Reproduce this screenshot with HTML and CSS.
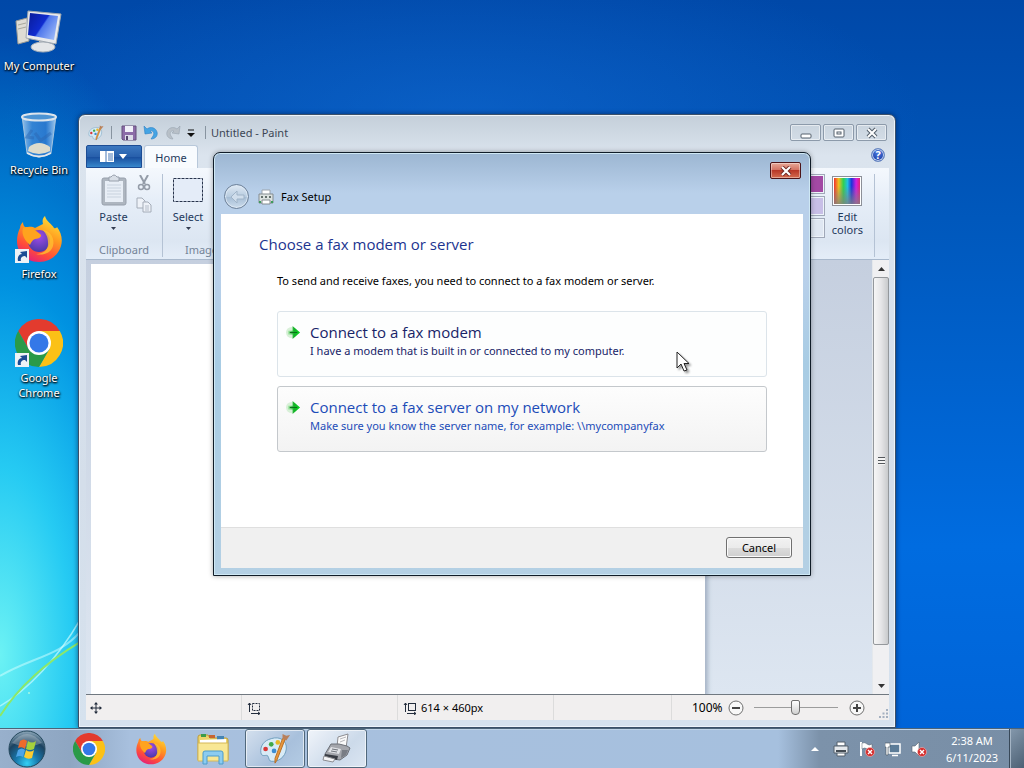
FILE: index.html
```html
<!DOCTYPE html>
<html lang="en">
<head>
    <meta charset="utf-8">
    <title>Fax Setup</title>
    <link rel="stylesheet" href="styles.css">
</head>

<body>
    <!-- Shared icons -->
    <svg class="defs" aria-hidden="true">
        <defs>
            <linearGradient id="ffFlame" x1="0.8" y1="0" x2="0.3" y2="1">
                <stop offset="0" stop-color="#ffe53a"/>
                <stop offset="0.4" stop-color="#ff9a1f"/>
                <stop offset="0.75" stop-color="#ff4b3a"/>
                <stop offset="1" stop-color="#e3207a"/>
            </linearGradient>
            <radialGradient id="ffGlobe" cx="0.5" cy="0.3" r="0.7">
                <stop offset="0" stop-color="#a04be8"/>
                <stop offset="1" stop-color="#4a3aa8"/>
            </radialGradient>
            <linearGradient id="screen" x1="0" y1="0.2" x2="1" y2="0.8">
                <stop offset="0" stop-color="#0a1ea0"/>
                <stop offset="0.45" stop-color="#0f2cd0"/>
                <stop offset="0.5" stop-color="#4f78ec"/>
                <stop offset="1" stop-color="#9fbcf8"/>
            </linearGradient>
            <linearGradient id="glass" x1="0" y1="0" x2="1" y2="0">
                <stop offset="0" stop-color="#b8d8f4" stop-opacity="0.8"/>
                <stop offset="0.3" stop-color="#4a90dc" stop-opacity="0.7"/>
                <stop offset="0.7" stop-color="#3a80d4" stop-opacity="0.7"/>
                <stop offset="1" stop-color="#c8e4fa" stop-opacity="0.8"/>
            </linearGradient>
            <radialGradient id="orb" cx="0.5" cy="0.9" r="0.9">
                <stop offset="0" stop-color="#35d0f4"/>
                <stop offset="0.35" stop-color="#1878ac"/>
                <stop offset="0.7" stop-color="#1c4260"/>
                <stop offset="1" stop-color="#90aabc"/>
            </radialGradient>
            <linearGradient id="rainbow">
                <stop offset="0" stop-color="#f03030"/>
                <stop offset="0.18" stop-color="#f0c020"/>
                <stop offset="0.36" stop-color="#30d050"/>
                <stop offset="0.52" stop-color="#20c0e0"/>
                <stop offset="0.68" stop-color="#2030d8"/>
                <stop offset="0.85" stop-color="#d020e0"/>
                <stop offset="1" stop-color="#e82070"/>
            </linearGradient>
            <linearGradient id="fade" x1="0" y1="0" x2="0" y2="1">
                <stop offset="0.3" stop-color="#808080" stop-opacity="0"/>
                <stop offset="1" stop-color="#808080" stop-opacity="0.8"/>
            </linearGradient>
            <linearGradient id="arrowGreen" x1="0" y1="0" x2="1" y2="0">
                <stop offset="0" stop-color="#b8ecb8"/>
                <stop offset="0.5" stop-color="#14b028"/>
                <stop offset="1" stop-color="#08d820"/>
            </linearGradient>
        </defs>
        <symbol id="chrome" viewBox="0 0 48 48">
            <path d="M3.2 12A24 24 0 0 1 44.8 12L24 12L13.6 30Z" fill="#e33b2e"/>
            <path d="M44.8 12A24 24 0 0 1 24 48L34.4 30L24 12Z" fill="#fbc116"/>
            <path d="M24 48A24 24 0 0 1 3.2 12L13.6 30L34.4 30Z" fill="#2a9a48"/>
            <circle cx="24" cy="24" r="12" fill="#fff"/>
            <circle cx="24" cy="24" r="9.5" fill="#3478e8"/>
        </symbol>
        <symbol id="firefox" viewBox="0 0 48 48">
            <path d="M30 1C31 6 37 9 39 13C41 14 42 12 42 12C46 17 48 24 46 31C43 41 34 47 24 47C11 47 2 38 2 26C2 21 3 17 5 13C5 10 7 8 8 7C8 10 9 11 11 13C14 11 18 12 20 13L28 9C27 5 28 3 30 1Z" fill="url(#ffFlame)"/>
            <circle cx="24" cy="26" r="11" fill="url(#ffGlobe)"/>
            <path d="M8 13C13 10 20 15 25 19C28 21 24 24 20 24C17 25 16 28 15 30C10 26 6 19 8 13Z" fill="#ffa31e"/>
            <path d="M28 15C36 16 40 24 38 31C36 38 28 41 21 39C29 39 34 34 33 27C33 21 30 18 28 15Z" fill="#ffbf30" opacity="0.8"/>
        </symbol>
        <symbol id="shortcut" viewBox="0 0 14 14">
            <rect width="14" height="14" fill="#eef2f6"/>
            <path d="M3 12C2 8 4 5 7 5L5 3L12 2L12 9L10 7C7 7 5 9 6 12Z" fill="#1c4c94"/>
        </symbol>
        <symbol id="palette" viewBox="0 0 34 34">
            <path d="M13 6C22 3 30 8 29 17C28 26 20 31 13 30C10 30 11 26 9 24C7 23 3 26 2 21C1 14 5 8 13 6Z" fill="#d8ebf6" stroke="#6c9cbc"/>
            <circle cx="13" cy="12" r="2.5" fill="#40a848"/>
            <circle cx="20" cy="10" r="2.5" fill="#e8b828"/>
            <circle cx="7" cy="17" r="2.5" fill="#d83838"/>
            <circle cx="16" cy="19" r="2.5" fill="#3c8cd0"/>
            <path d="M28 6L19 29L17 32L17 27L25 6Z" fill="#e8973c" stroke="#b86c20"/>
            <path d="M25 6L25 1L29 3L33 2L29 8Z" fill="#b8805c"/>
        </symbol>
        <symbol id="error" viewBox="0 0 10 10">
            <circle cx="5" cy="5" r="4.5" fill="#d42c2c" stroke="#f4c0c0" stroke-width="0.6"/>
            <path d="M3 3L7 7M7 3L3 7" stroke="#fff" stroke-width="1.4"/>
        </symbol>
        <symbol id="goArrow" viewBox="0 0 16 16">
            <circle cx="6" cy="8" r="6" fill="#d8f0d8"/>
            <path d="M2 6H7V1L15 8L7 15V10H2Z" fill="url(#arrowGreen)"/>
            <path d="M4 8H12" stroke="#086c18"/>
        </symbol>
    </svg>

    <main class="desktop">
        <svg class="rays" viewBox="0 0 80 200" preserveAspectRatio="none" aria-hidden="true">
            <path d="M0 178C28 162 58 130 80 92" stroke="#c8fcff" stroke-width="1.5" fill="none" opacity="0.7"/>
            <path d="M0 148C30 130 60 128 80 104" stroke="#d8ffff" stroke-width="2" fill="none" opacity="0.5"/>
            <path d="M0 188C20 156 50 132 80 114" stroke="#8ce868" stroke-width="2" fill="none"/>
            <circle cx="29" cy="165" r="1" fill="#a8f8e0"/>
        </svg>

        <nav class="shortcuts">
            <a class="shortcut" href="#computer">
                <svg viewBox="0 0 48 48" aria-hidden="true">
                    <path d="M1 14L12 11L14 34L3 37Z" fill="#dedcd4" stroke="#9a9a94"/>
                    <path d="M3 18L11 16M3 22L11 20" stroke="#a8a89c"/>
                    <path d="M24 32L32 33L33 40L24 40Z" fill="#c0c4c8"/>
                    <ellipse cx="28" cy="40" rx="12" ry="5" fill="#e4e6e8" stroke="#a8b0b8"/>
                    <path d="M13 4L46 7L41 37L11 31Z" fill="#e8eaec" stroke="#a0a8b0"/>
                    <path d="M15 6L43 9L39 33L13 28Z" fill="url(#screen)"/>
                </svg>
                <span>My Computer</span>
            </a>
            <a class="shortcut" href="#recycle">
                <svg viewBox="0 0 48 48" aria-hidden="true">
                    <path d="M7 5L12 42Q24 50 36 42L41 5Z" fill="url(#glass)" stroke="#a4c4e0"/>
                    <path d="M14 36Q24 28 35 36L35 40Q24 46 13 40Z" fill="#dedccc"/>
                    <path d="M17 19L12 26L19 27M25 30L36 22M20 22L26 30" stroke="#2c68b4" stroke-width="3" fill="none" opacity="0.5"/>
                    <ellipse cx="24" cy="6" rx="17" ry="3.5" fill="#4c94d4" stroke="#dce4ec" stroke-width="2"/>
                    <path d="M12 42Q24 49 36 42" stroke="#e4e8ec" stroke-width="2" fill="none"/>
                </svg>
                <span>Recycle Bin</span>
            </a>
            <a class="shortcut" href="#firefox">
                <svg viewBox="0 0 48 48" aria-hidden="true"><use href="#firefox" width="48" height="48"/><use href="#shortcut" y="34" width="14" height="14"/></svg>
                <span>Firefox</span>
            </a>
            <a class="shortcut" href="#chrome">
                <svg viewBox="0 0 48 48" aria-hidden="true"><use href="#chrome" width="48" height="48"/><use href="#shortcut" y="34" width="14" height="14"/></svg>
                <span>Google Chrome</span>
            </a>
        </nav>

        <!-- Paint -->
        <section class="paint">
            <header class="titlebar">
                <svg class="app-icon" viewBox="0 0 34 34" aria-hidden="true"><use href="#palette"/></svg>
                <span class="divider"></span>
                <div class="quick">
                    <button aria-label="Save">
                        <svg viewBox="0 0 16 16"><path d="M1 1H15V15H2L1 14Z" fill="#8c6ca8" stroke="#64507c"/><path d="M4 1H12V7H4Z" fill="#f0f0f8"/><path d="M4 10H12V15H4Z" fill="#dcdce8"/><path d="M5 11H7V15H5Z" fill="#54446c"/></svg>
                    </button>
                    <button aria-label="Undo">
                        <svg viewBox="0 0 16 16"><path d="M1 1L2 9L9 8L7 6C10 5 12 8 10 11L8 14C13 14 15 10 14 7C13 3 8 1 4 4Z" fill="#44a4e4" stroke="#2c80c4" stroke-width="0.6"/></svg>
                    </button>
                    <button aria-label="Redo">
                        <svg viewBox="0 0 16 16"><path d="M15 1L14 9L7 8L9 6C6 5 4 8 6 11L8 14C3 14 1 10 2 7C3 3 8 1 12 4Z" fill="#b8c0c8" stroke="#98a4b0" stroke-width="0.6"/></svg>
                    </button>
                    <button class="more" aria-label="Customize toolbar">
                        <svg viewBox="0 0 8 8"><path d="M1 1H7" stroke="#111"/><path d="M0 4H8L4 8Z" fill="#111"/></svg>
                    </button>
                </div>
                <span class="divider"></span>
                <h2>Untitled - Paint</h2>
                <div class="caption">
                    <button aria-label="Minimize"><svg viewBox="0 0 12 12"><rect x="1" y="7" width="10" height="4" rx="1" fill="#fff" stroke="#54606c"/></svg></button>
                    <button aria-label="Maximize"><svg viewBox="0 0 12 12"><rect x="1" y="2" width="10" height="8" rx="1" fill="#fff" stroke="#54606c"/><rect x="4" y="5" width="4" height="2" fill="#fff" stroke="#54606c"/></svg></button>
                    <button aria-label="Close"><svg viewBox="0 0 12 12"><path d="M2 2L10 10M10 2L2 10" stroke="#54606c" stroke-width="4"/><path d="M2 2L10 10M10 2L2 10" stroke="#fff" stroke-width="2"/></svg></button>
                </div>
            </header>

            <div class="tabs">
                <button class="file-tab" aria-label="Paint menu">
                    <svg viewBox="0 0 28 12"><rect width="14" height="11" fill="#fff"/><path d="M6 0V11M8 3H13M8 5H13M8 7H13M8 9H13" stroke="#4878b8"/><path d="M19 3H27L23 8Z" fill="#fff"/></svg>
                </button>
                <button class="tab">Home</button>
                <button class="help" aria-label="Help"><span>?</span></button>
            </div>

            <div class="ribbon">
                <div class="group clipboard">
                    <div class="tools">
                        <button class="tool">
                            <svg viewBox="0 0 26 32"><rect x="1" y="4" width="24" height="27" rx="2" fill="#aeb6c0" stroke="#98a0ac"/><rect x="4" y="7" width="18" height="21" fill="#e8eef6"/><path d="M8 3H10Q13 -1 16 3H18V7H8Z" fill="#d8dee6" stroke="#98a0ac"/><path d="M6 11H20M6 14H20M6 17H20M6 20H20M6 23H20" stroke="#c8d2de"/></svg>
                            <span>Paste</span>
                            <svg class="caret" viewBox="0 0 5 3"><path d="M0 0H5L2.500 3Z" fill="#333c50"/></svg>
                        </button>
                        <div class="small-tools">
                            <button aria-label="Cut"><svg viewBox="0 0 16 16"><path d="M4 0L9 9M12 0L7 9" stroke="#949ca8" stroke-width="2"/><circle cx="5" cy="12" r="2.500" fill="none" stroke="#949ca8" stroke-width="1.500"/><circle cx="11" cy="12" r="2.500" fill="none" stroke="#949ca8" stroke-width="1.500"/></svg></button>
                            <button aria-label="Copy"><svg viewBox="0 0 16 16"><path d="M1 1H6L9 4V11H1Z" fill="#eef2f8" stroke="#a4acb8"/><path d="M7 5H12L15 8V15H7Z" fill="#eef2f8" stroke="#a4acb8"/><path d="M9 9H13M9 11H13M9 13H13" stroke="#b4bcc8"/></svg></button>
                        </div>
                    </div>
                    <span class="group-name">Clipboard</span>
                </div>
                <div class="group image">
                    <div class="tools">
                        <button class="tool">
                            <svg viewBox="0 0 32 32"><rect x="1.500" y="4.500" width="29" height="23" fill="#e4ecf8" stroke="#28344c" stroke-dasharray="3 1"/></svg>
                            <span>Select</span>
                            <svg class="caret" viewBox="0 0 5 3"><path d="M0 0H5L2.500 3Z" fill="#333c50"/></svg>
                        </button>
                    </div>
                    <span class="group-name">Image</span>
                </div>
                <div class="group colors">
                    <div class="swatches">
                        <button class="swatch plum" aria-label="Plum"></button>
                        <button class="swatch lavender" aria-label="Lavender"></button>
                        <button class="swatch" aria-label="Empty"></button>
                    </div>
                    <button class="tool edit">
                        <svg viewBox="0 0 30 30"><rect x="0.500" y="0.500" width="29" height="29" fill="#fff" stroke="#8c9098"/><rect x="2" y="2" width="26" height="26" fill="url(#rainbow)"/><rect x="2" y="2" width="26" height="26" fill="url(#fade)"/></svg>
                        <span>Edit<br>colors</span>
                    </button>
                </div>
            </div>

            <div class="workspace">
                <div class="canvas"></div>
                <div class="scrollbar">
                    <button aria-label="Scroll up"><svg viewBox="0 0 7 4"><path d="M0 4L3.500 0L7 4Z" fill="#333"/></svg></button>
                    <div class="track"><div class="thumb"><i></i></div></div>
                    <button aria-label="Scroll down"><svg viewBox="0 0 7 4"><path d="M0 0H7L3.500 4Z" fill="#333"/></svg></button>
                </div>
            </div>

            <footer class="status">
                <div class="cell"><svg viewBox="0 0 14 14"><path d="M7 2V12M2 7H12" stroke="#222c3c"/><path d="M7 1L5 3.500H9ZM7 13L5 10.500H9ZM1 7L3.500 5V9ZM13 7L10.500 5V9Z" fill="#222c3c"/></svg></div>
                <div class="cell"><svg viewBox="0 0 14 14"><path d="M2.500 2V11M1 4L2.500 2L4 4M4 12.500H13M11 11L13 12.500L11 14" stroke="#222c3c" fill="none"/><rect x="5.500" y="2.500" width="7" height="7" fill="none" stroke="#222c3c" stroke-dasharray="2 1"/></svg></div>
                <div class="cell"><svg viewBox="0 0 14 14"><path d="M2.500 2V11M1 4L2.500 2L4 4M4 12.500H13M11 11L13 12.500L11 14" stroke="#222c3c" fill="none"/><rect x="5.500" y="2.500" width="7" height="7" fill="none" stroke="#222c3c"/></svg><span>614 × 460px</span></div>
                <div class="cell short"></div>
                <div class="zoom">
                    <label for="zoom">100%</label>
                    <button aria-label="Zoom out"><svg viewBox="0 0 16 16"><circle cx="8" cy="8" r="7" fill="#f8f8f8" stroke="#707070"/><path d="M4 8H12" stroke="#444" stroke-width="2"/></svg></button>
                    <input type="range" id="zoom" min="0" max="100" value="50">
                    <button aria-label="Zoom in"><svg viewBox="0 0 16 16"><circle cx="8" cy="8" r="7" fill="#f8f8f8" stroke="#707070"/><path d="M4 8H12M8 4V12" stroke="#444" stroke-width="2"/></svg></button>
                    <svg class="grip" viewBox="0 0 9 9" aria-hidden="true"><path d="M7 0H9V2H7ZM7 3.500H9V5.500H7ZM3.500 3.500H5.500V5.500H3.500ZM7 7H9V9H7ZM3.500 7H5.500V9H3.500ZM0 7H2V9H0Z" fill="#a4b0c0"/></svg>
                </div>
            </footer>
        </section>

        <!-- Fax Setup -->
        <section class="dialog" role="dialog" aria-labelledby="dialog-title">
            <div class="dialog-caption">
                <button class="close" aria-label="Close"><svg viewBox="0 0 12 10"><path d="M2 1L10 9M10 1L2 9" stroke="#6c2420" stroke-width="4"/><path d="M2 1L10 9M10 1L2 9" stroke="#fff" stroke-width="2.200"/></svg></button>
            </div>
            <header class="dialog-head">
                <button class="back" aria-label="Back" disabled><svg viewBox="0 0 16 14"><path d="M8 1L2 7L8 13V9H15V5H8Z" fill="#d0deec" stroke="#a0b4c8"/></svg></button>
                <svg class="fax-icon" viewBox="0 0 16 16" aria-hidden="true"><path d="M4 1H12V6H4Z" fill="#fff" stroke="#9ca4ac"/><path d="M1 5H15V14H1Z" fill="#dce2e0" stroke="#848c90"/><path d="M3 7H5V9H3ZM7 7H9V9H7ZM11 7H13V9H11Z" fill="#64706c"/><path d="M4 11H12V15H4Z" fill="#fff" stroke="#848c90"/><path d="M1 12H3V14H1ZM13 12H15V14H13Z" fill="#3c9c5c"/></svg>
                <h2 id="dialog-title">Fax Setup</h2>
            </header>
            <div class="dialog-body">
                <h1>Choose a fax modem or server</h1>
                <p>To send and receive faxes, you need to connect to a fax modem or server.</p>
                <div class="choices">
                    <button class="choice hot">
                        <svg aria-hidden="true"><use href="#goArrow"/></svg>
                        <span><strong>Connect to a fax modem</strong>I have a modem that is built in or connected to my computer.</span>
                    </button>
                    <button class="choice">
                        <svg aria-hidden="true"><use href="#goArrow"/></svg>
                        <span><strong>Connect to a fax server on my network</strong>Make sure you know the server name, for example: \\mycompanyfax</span>
                    </button>
                </div>
            </div>
            <footer class="dialog-foot">
                <button class="cancel">Cancel</button>
            </footer>
        </section>

        <svg class="pointer" viewBox="0 0 14 22" aria-hidden="true"><path d="M1 1V17L5 13L8 20L11 19L8 12.500H13Z" fill="#fff" stroke="#222"/></svg>
    </main>

    <footer class="taskbar">
        <button class="start" aria-label="Start">
            <svg viewBox="0 0 38 38"><circle cx="19" cy="19" r="18" fill="url(#orb)" stroke="#24485c"/><path d="M4 13Q19 -5 34 13Q19 20 4 13Z" fill="#fff" opacity="0.25"/>
                <path d="M12 11Q16 8 19 11L17 19Q14 16 10 18Z" fill="#ee6a2c"/><path d="M20 11Q24 14 28 11L26 19Q22 21 18 19Z" fill="#a4d03c"/><path d="M10 20Q14 17 17 20L15 27Q12 25 8 27Z" fill="#4ca4e8"/><path d="M18 20Q22 23 26 20L24 28Q20 30 16 27Z" fill="#fccc30"/></svg>
        </button>
        <button class="task" aria-label="Google Chrome"><svg><use href="#chrome"/></svg></button>
        <button class="task" aria-label="Firefox"><svg><use href="#firefox"/></svg></button>
        <button class="task" aria-label="Explorer">
            <svg viewBox="0 0 32 32"><path d="M1 4Q1 2 3 2H11L13 5H29Q31 5 31 7V27H1Z" fill="#ecd46c" stroke="#bc9c3c"/><path d="M4 1H9V4H4Z" fill="#3c9c4c"/><path d="M12 2H18V5H12Z" fill="#c86430"/><path d="M20 3H27V7H20Z" fill="#4484b4"/><path d="M3 7L29 6V10H3Z" fill="#fff"/><path d="M1 10H31V28H1Z" fill="#f8e794" stroke="#d4b858"/><path d="M6 31V20Q6 18 8 18H24Q26 18 26 20V31H22V23H10V31Z" fill="#8cccf0" stroke="#4c9ccc"/></svg>
        </button>
        <button class="task open" aria-label="Paint"><svg><use href="#palette"/></svg></button>
        <button class="task open current" aria-label="Fax Setup">
            <svg viewBox="0 0 32 32"><path d="M17 4L27 1L25 15L16 14Z" fill="#fafafa" stroke="#8c8c90"/><path d="M19 6L25 4M19 9L24 7" stroke="#b8b8bc"/><path d="M10 11L18 11L26 13L29 15L26 22L19 27L5 25L4 21Z" fill="#a4a6ac" stroke="#6c7078"/><path d="M10 14L20 16L18 21L7 19Z" fill="#e0e2e6"/><path d="M11 16L17 17M10 18L16 19" stroke="#70747c"/><path d="M4 21L17 23L16 27L3 24Z" fill="#383c44"/><path d="M3 23L14 26L12 29L2 27Z" fill="#f4f4f6" stroke="#8c8c90"/><path d="M21 17L27 17L25 22L20 25Z" fill="#787c84"/></svg>
        </button>
        <div class="tray">
            <button class="expand" aria-label="Show hidden icons"><svg viewBox="0 0 16 16"><path d="M4 10L8 6L12 10Z" fill="#fff"/></svg></button>
            <button aria-label="Printer"><svg viewBox="0 0 16 16"><path d="M4 1H12V5H4ZM4 11H12V15H4Z" fill="#fff" stroke="#54606c"/><path d="M1 5H15V12H1Z" fill="#e4e8ec" stroke="#54606c"/><path d="M3 9H13V11H3Z" fill="#444c54"/></svg></button>
            <button aria-label="Action center"><svg viewBox="0 0 16 16"><path d="M2 1V15" stroke="#fff" stroke-width="2"/><path d="M3 2Q6 1 8 3T13 3V9Q10 10 8 8T3 8Z" fill="#fff" stroke="#54606c" stroke-width="0.500"/><use href="#error" x="6" y="6" width="10" height="10"/></svg></button>
            <button aria-label="Network"><svg viewBox="0 0 16 16"><path d="M4 3H15V12H4Z" fill="#5c7c98" stroke="#fff" stroke-width="1.500"/><path d="M7 14.500H13" stroke="#fff" stroke-width="1.500"/><path d="M0 2H5V6H3V14H1V6H0Z" fill="#fff" stroke="#44505c" stroke-width="0.600"/></svg></button>
            <button aria-label="Volume"><svg viewBox="0 0 16 16"><path d="M1 5H4L8 1V15L4 11H1Z" fill="#fff" stroke="#54606c" stroke-width="0.600"/><use href="#error" x="6" y="6" width="10" height="10"/></svg></button>
            <time class="clock" datetime="2023-06-11T02:38">2:38 AM<br>6/11/2023</time>
        </div>
        <button class="show-desktop" aria-label="Show desktop"></button>
    </footer>
</body>
</html>
```

FILE: styles.css
```css
* { box-sizing: border-box; }

body {
    margin: 0;
    height: 100vh;
    display: flex;
    flex-direction: column;
    overflow: hidden;
    font-family: "Noto Sans", "Open Sans", sans-serif;
    font-size: 11px;
    line-height: 15px;
    color: #000;
}

h1, h2, p { margin: 0; font-weight: normal; }
h2 { font-size: 11px; }
button { font: inherit; color: inherit; padding: 0; border: 0; background: none; }
svg { display: block; flex: none; }
.defs { position: absolute; width: 0; height: 0; }

/* Desktop */
.desktop {
    position: relative;
    flex: 1;
    min-height: 0;
    background:
        radial-gradient(ellipse 240px 620px at 0 90%, #6cf2f4 0%, rgba(40, 208, 244, 0.95) 30%, rgba(0, 168, 236, 0.7) 60%, rgba(0, 140, 230, 0) 100%),
        radial-gradient(ellipse 460px 160px at 45% 16%, rgba(20, 110, 216, 0.5), rgba(20, 110, 216, 0)),
        linear-gradient(180deg, #0048a8 0%, #0058bc 30%, #006ce0 75%, #0064d8 100%);
}
.rays { position: absolute; left: 0; bottom: 0; width: 80px; height: 200px; }

.shortcuts {
    display: grid;
    grid-auto-rows: 104px;
    width: 78px;
    padding-top: 7px;
}
.shortcut {
    display: flex;
    flex-direction: column;
    align-items: center;
    gap: 3px;
    color: #fff;
    text-align: center;
    text-decoration: none;
    text-shadow: 1px 1px 2px #000, 0 1px 2px #000;
}
.shortcut svg { width: 48px; height: 48px; }

/* Paint window */
.paint {
    position: absolute;
    top: 114px;
    right: 128px;
    bottom: 0;
    left: 78px;
    display: flex;
    flex-direction: column;
    padding: 0 6px 7px 7px;
    border: 1px solid #3c5068;
    border-radius: 7px 7px 0 0;
    background: linear-gradient(180deg, #c4cfda 0, #dbe4ee 40px, #d4deea 60%, #d6e2ee 100%);
    box-shadow: inset 0 0 0 1px #eef4fa, 0 0 5px rgba(0, 20, 60, 0.6);
}
.titlebar { display: flex; align-items: center; height: 30px; padding: 5px 2px 0; color: #3c4654; }
.app-icon { width: 16px; height: 16px; }
.divider { width: 1px; height: 13px; margin: 0 6px 0 7px; background: #8894a0; }
.quick { display: flex; align-items: center; gap: 6px; padding-left: 3px; }
.quick svg { width: 16px; height: 16px; }
.quick .more svg { width: 8px; height: 8px; }
.quick + .divider { margin: 0 5px 0 10px; }
.caption { display: flex; gap: 2px; margin-left: auto; }
.caption button {
    display: grid;
    place-items: center;
    width: 31px;
    height: 17px;
    border: 1px solid #8c9aaa;
    border-radius: 2px;
    box-shadow: inset 0 0 0 1px rgba(255, 255, 255, 0.5);
}
.caption svg { width: 12px; height: 12px; }

.tabs { display: flex; gap: 2px; height: 23px; }
.file-tab {
    display: grid;
    place-items: center;
    width: 56px;
    border: 1px solid #1c4c94;
    border-radius: 2px 2px 0 0;
    background: linear-gradient(180deg, #3c78c0 0, #2860ac 50%, #184c9c 51%, #3888cc 100%);
}
.file-tab svg { width: 28px; height: 12px; }
.tab { width: 54px; border: 1px solid #b8c8da; border-bottom: 0; border-radius: 3px 3px 0 0; background: #f8fbfe; color: #1e395b; }
.help {
    width: 14px;
    height: 14px;
    margin: 3px 4px 0 auto;
    border: 1px solid #6888c0;
    border-radius: 50%;
    background: radial-gradient(circle at 50% 30%, #4c7ce0, #102c98);
    box-shadow: inset 0 0 0 1px #c4d4f0;
    color: #fff;
    font-weight: bold;
    line-height: 12px;
}

.ribbon {
    display: flex;
    height: 92px;
    padding: 6px 0 2px;
    border-bottom: 1px solid #a8b8cc;
    background: linear-gradient(180deg, #f4f8fd 0, #e6eef8 35%, #dce6f2 80%, #e4edf8 100%);
    color: #1e395b;
}
.group { display: flex; flex-direction: column; justify-content: space-between; align-items: center; }
.group + .group { border-left: 1px solid #b4c2d4; }
.clipboard { width: 76px; }
.image { width: 78px; }
.image .tools { align-self: flex-start; padding-left: 9px; }
.group-name { color: #748498; }
.tools { display: flex; gap: 8px; }
.tool { display: flex; flex-direction: column; align-items: center; line-height: 13px; }
.tool svg { width: 32px; height: 32px; margin-bottom: 4px; }
.tool .caret { width: 5px; height: 3px; margin: 4px 0 0; }
.clipboard .tools { padding-left: 3px; }
.clipboard .tool svg:first-child { width: 26px; }
.small-tools { display: flex; flex-direction: column; gap: 6px; padding-top: 1px; }
.small-tools svg { width: 16px; height: 16px; }
.group.colors { flex-direction: row; align-items: flex-start; gap: 7px; margin-left: auto; margin-right: 14px; padding-right: 11px; border-left: 0; border-right: 1px solid #b4c2d4; }
.swatches { display: grid; gap: 2px; }
.swatch { width: 20px; height: 20px; border: 1px solid #a0a8b8; background: #dfe7f2; box-shadow: inset 0 0 0 1px #eef4fa; }
.plum { background: #a349a4; }
.lavender { background: #c8bfe7; }
.edit { padding-top: 2px; }
.edit svg { width: 30px; height: 30px; }

.workspace {
    flex: 1;
    min-height: 0;
    display: flex;
    justify-content: space-between;
    padding: 4px 0 0 5px;
    border-bottom: 1px solid #707880;
    background: linear-gradient(180deg, #c5cfdf, #dde6f1);
}
.canvas { flex: 0 1 614px; background: #fff; box-shadow: 3px 3px 4px rgba(90, 110, 140, 0.4); clip-path: inset(0 -8px 0 0); }
.scrollbar { display: flex; flex-direction: column; width: 17px; margin-top: -4px; background: #f0f0f2; border-left: 1px solid #e4e8ec; }
.scrollbar button { display: grid; place-items: center; height: 17px; }
.scrollbar button svg { width: 7px; height: 4px; }
.track { flex: 1; }
.thumb {
    display: grid;
    place-items: center;
    height: 92%;
    border: 1px solid #94989c;
    border-radius: 2px;
    background: linear-gradient(90deg, #f6f6f6, #e6e6e8 50%, #c8cacc);
}
.thumb i { width: 7px; height: 8px; background: repeating-linear-gradient(180deg, #54585c 0, #54585c 1px, #f4f4f4 1px, #f4f4f4 3px); }

.status { display: flex; height: 25px; background: #f1efef; }
.cell { display: flex; align-items: center; gap: 4px; flex: 0 1 156px; padding-left: 3px; border-right: 1px solid #dcdcdc; }
.cell.short { flex-basis: 118px; }
.cell svg { width: 14px; height: 14px; }
.cell:nth-child(n + 2) { padding-left: 5px; }
.zoom { flex: 1; display: flex; align-items: center; padding-left: 20px; }
.zoom label { font-size: 12px; }
.zoom button { margin-left: 5px; }
.zoom button svg { width: 16px; height: 16px; }
.zoom input { appearance: none; width: 84px; height: 16px; margin: 0 6px 0 10px; background: linear-gradient(#9c9c9c, #9c9c9c) 0 7px / 100% 1px no-repeat; }
.zoom input::-webkit-slider-thumb {
    appearance: none;
    width: 9px;
    height: 15px;
    border: 1px solid #707070;
    border-radius: 2px 2px 4px 4px;
    background: linear-gradient(180deg, #fff, #d0d0d0);
}
.grip { align-self: flex-end; width: 9px; height: 9px; margin: 0 1px 2px auto; }

/* Fax Setup dialog */
.dialog {
    position: absolute;
    top: 152px;
    left: 213px;
    right: 213px;
    padding: 0 7px 7px;
    border: 1px solid #101c28;
    border-radius: 7px 7px 0 0;
    background: linear-gradient(180deg, #9cb6d2 0, #b9d0ea 40px, #b9d0ea 120px, #a8cce4 50%, #b4d0e4 100%);
    box-shadow: inset 0 0 0 1px #cfe8f4, 0 0 5px rgba(0, 0, 0, 0.35);
}
.dialog-caption { display: flex; justify-content: flex-end; height: 27px; padding: 9px 2px 0; }
.close {
    display: grid;
    place-items: center;
    width: 31px;
    height: 17px;
    border: 1px solid #4c1418;
    border-radius: 2px;
    background: linear-gradient(180deg, #e8a898 0, #d47464 45%, #b83828 50%, #d46c50 100%);
    box-shadow: inset 0 0 0 1px rgba(255, 255, 255, 0.4);
}
.close svg { width: 12px; height: 10px; }
.dialog-head { display: flex; align-items: center; height: 34px; padding: 0 3px 1px; }
.back {
    display: grid;
    place-items: center;
    width: 25px;
    height: 25px;
    border: 1px solid #6c8098;
    border-radius: 50%;
    background: linear-gradient(180deg, #e0eaf4 0, #b8cce0 50%, #a4bcd4 51%, #ccdcec 100%);
    box-shadow: inset 0 0 0 1px #dce8f4;
}
.back svg { width: 16px; height: 14px; }
.fax-icon { width: 16px; height: 16px; margin: 0 7px 0 9px; }
.dialog-body { min-height: 313px; padding: 18px 36px 20px 38px; background: #fff; }
.dialog-body h1 { font-family: "Open Sans", sans-serif; font-size: 15px; line-height: 24px; color: #1c3490; }
.dialog-body p { padding: 17px 0 0 18px; }
.choices { display: grid; gap: 9px; padding: 23px 0 0 18px; }
.choice {
    display: flex;
    gap: 8px;
    padding: 10px 8px 18px;
    border: 1px solid #c4c8cc;
    border-radius: 3px;
    background: linear-gradient(180deg, #fdfdfd, #f3f3f3);
    color: #1c4cb8;
    text-align: left;
}
.choice svg { width: 15px; height: 15px; margin: 3px 1px 0 0; }
.choice strong { display: block; margin-bottom: 1px; font-family: "Open Sans", sans-serif; font-size: 15px; line-height: 20px; font-weight: normal; }
.choice.hot { border-color: #dce4ea; background: #fdfefe; color: #182468; }
.dialog-foot { display: flex; justify-content: flex-end; padding: 9px 11px 10px; border-top: 1px solid #dfdfdf; background: #f0f0f0; }
.cancel {
    width: 66px;
    height: 21px;
    border: 1px solid #707070;
    border-radius: 3px;
    background: linear-gradient(180deg, #f2f2f2 0, #ebebeb 50%, #dddddd 51%, #cfcfcf 100%);
    box-shadow: inset 0 0 0 1px #fbfbfb;
}
.pointer { position: absolute; left: 676px; top: 351px; width: 14px; height: 22px; filter: drop-shadow(2px 2px 1px rgba(0, 0, 0, 0.4)); }

/* Taskbar */
.taskbar {
    position: relative;
    display: flex;
    gap: 2px;
    height: 40px;
    border-top: 1px solid #4c6478;
    background: linear-gradient(90deg, #98b0cc 0, #8ea6c2 70px, #a8c0de 130px, #a6c0de 76%, #7c92aa 80%, #788ea6 100%);
    box-shadow: inset 0 1px 0 #c0d4e8;
}
.start { width: 57px; padding-left: 8px; }
.start svg { width: 38px; height: 38px; }
.task { display: grid; place-items: center; width: 60px; }
.task svg { width: 32px; height: 32px; }
.open {
    border: 1px solid #50687c;
    border-radius: 3px;
    background: linear-gradient(135deg, #d4e0ee, #a8c0dc 60%, #b4cce4);
    box-shadow: inset 0 0 0 1px rgba(255, 255, 255, 0.6);
}
.current { background: linear-gradient(135deg, #f0f4fa, #ccdaea 60%, #dce6f2); }
.tray { display: flex; align-items: center; gap: 10px; margin-left: auto; color: #fff; }
.tray svg { width: 16px; height: 16px; }
.clock { width: 70px; line-height: 17px; text-align: center; }
.show-desktop { width: 15px; border-left: 1px solid #384858; background: linear-gradient(135deg, #8498ac, #4c6074); box-shadow: inset 1px 0 0 #a4b4c4; }
```
